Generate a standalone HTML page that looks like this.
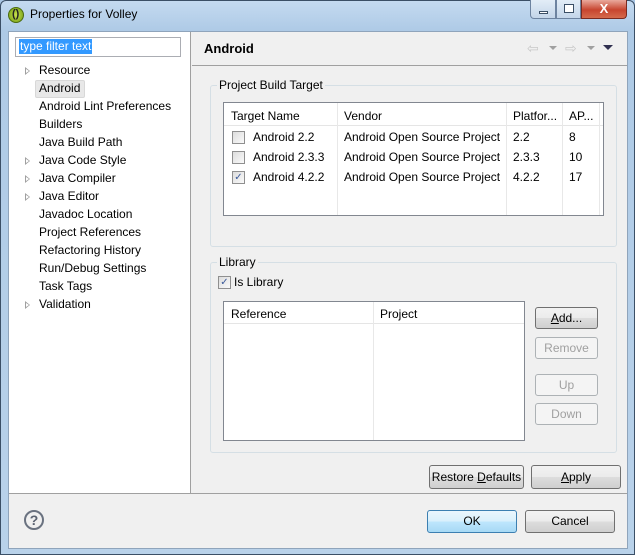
<!DOCTYPE html>
<html><head><style>
*{box-sizing:border-box;margin:0;padding:0}
body{width:635px;height:555px;position:relative;font-family:"Liberation Sans",sans-serif;font-size:12px;color:#000;background:#a9c6e4;overflow:hidden}
.a{position:absolute}
.frame{left:0;top:0;width:635px;height:555px;border:1px solid #3b4f66;border-radius:6px 6px 0 0;background:linear-gradient(#c4daf0,#aecae6 30px,#b9d2ea)}
.client{left:8px;top:31px;width:620px;height:518px;background:#f0f0f0;border:1px solid #8fa4bb}
.btn{position:absolute;border:1px solid #707070;border-radius:3px;background:linear-gradient(#f2f2f2,#ebebeb 50%,#dddddd 51%,#cfcfcf);text-align:center;line-height:20px}
.dis{color:#a0a0a0;border-color:#adb2b5;background:#f4f4f4}
.grp{position:absolute;border:1px solid #d5dfe5;border-radius:3px}
.lbl{position:absolute;background:#f0f0f0;padding:0 2px}
.cb{position:absolute;width:13px;height:13px;border:1px solid #8f8f8f;background:linear-gradient(135deg,#dcdcdc,#fafafa)}
.tw{position:absolute;background:#fff;border:1px solid #828790}
.li{position:absolute;left:39px}
.tri{position:absolute;left:25px;width:0;height:0;border-left:5px solid #a0a0a0;border-top:4px solid transparent;border-bottom:4px solid transparent}
.tri:after{content:"";position:absolute;left:-4px;top:-2px;border-left:3px solid #fff;border-top:2px solid transparent;border-bottom:2px solid transparent}
</style></head><body>
<div class="a frame"></div>
<div class="a" style="left:8px;top:7px;width:16px;height:16px;border-radius:50%;background:radial-gradient(#c8e04c,#6f9a12);border:1px solid #4a6a10"></div>
<div class="a" style="left:12px;top:8px;font-size:11px;font-weight:bold;color:#222">()</div>
<div class="a" style="left:30px;top:7px;font-size:12px">Properties for Volley</div>
<div class="a" style="left:530px;top:0;width:26px;height:19px;border:1px solid #6d83a0;border-top:0;border-radius:0 0 0 4px;background:linear-gradient(#e3edf7,#c3d5e9)"><div class="a" style="left:8px;top:11px;width:9px;height:3px;background:#fff;border:1px solid #3b4f66"></div></div>
<div class="a" style="left:556px;top:0;width:25px;height:19px;border:1px solid #6d83a0;border-top:0;background:linear-gradient(#e3edf7,#c3d5e9)"><div class="a" style="left:7px;top:4px;width:10px;height:9px;border:1px solid #3b4f66;background:#fff"></div></div>
<div class="a" style="left:581px;top:0;width:46px;height:19px;border:1px solid #7a2a20;border-top:0;border-radius:0 0 4px 0;background:linear-gradient(#e9a99c,#c7452f 55%,#d56a4c);color:#fff;font-weight:bold;font-size:13px;text-align:center;line-height:17px">X</div>
<div class="a client"></div>
<div class="a" style="left:9px;top:32px;width:182px;height:461px;background:#fff;border-right:1px solid #a0a0a0"></div>
<div class="a" style="left:15px;top:37px;width:166px;height:20px;border:1px solid #abadb3;background:#fff"></div>
<div class="a" style="left:19px;top:39px;background:#3399ff;color:#fff;padding:0 1px;line-height:15px">type filter text</div>
<div class="tri" style="top:67px"></div><div class="li" style="top:63px">Resource</div>
<div class="a" style="left:35px;top:80px;width:50px;height:18px;background:#e8e8e8;border:1px solid #d8d8d8;border-radius:2px"></div>
<div class="li" style="top:81px">Android</div>
<div class="li" style="top:99px">Android Lint Preferences</div>
<div class="li" style="top:117px">Builders</div>
<div class="li" style="top:135px">Java Build Path</div>
<div class="tri" style="top:157px"></div><div class="li" style="top:153px">Java Code Style</div>
<div class="tri" style="top:175px"></div><div class="li" style="top:171px">Java Compiler</div>
<div class="tri" style="top:193px"></div><div class="li" style="top:189px">Java Editor</div>
<div class="li" style="top:207px">Javadoc Location</div>
<div class="li" style="top:225px">Project References</div>
<div class="li" style="top:243px">Refactoring History</div>
<div class="li" style="top:261px">Run/Debug Settings</div>
<div class="li" style="top:279px">Task Tags</div>
<div class="tri" style="top:301px"></div><div class="li" style="top:297px">Validation</div>
<div class="a" style="left:192px;top:32px;width:435px;height:34px;border-bottom:1px solid #a0a0a0"></div>
<div class="a" style="left:204px;top:41px;font-weight:bold;font-size:13px">Android</div>
<div class="a" style="left:527px;top:40px;color:#c8c8c8;font-size:14px">⇦</div>
<div class="a" style="left:549px;top:46px;border-top:4px solid #a0a0a0;border-left:4px solid transparent;border-right:4px solid transparent"></div>
<div class="a" style="left:565px;top:40px;color:#c8c8c8;font-size:14px">⇨</div>
<div class="a" style="left:587px;top:46px;border-top:4px solid #a0a0a0;border-left:4px solid transparent;border-right:4px solid transparent"></div>
<div class="a" style="left:603px;top:45px;border-top:5px solid #303050;border-left:5px solid transparent;border-right:5px solid transparent"></div>
<div class="grp" style="left:210px;top:85px;width:407px;height:162px"></div>
<div class="lbl" style="left:217px;top:78px">Project Build Target</div>
<div class="tw" style="left:223px;top:102px;width:381px;height:114px"></div>
<div class="a" style="left:224px;top:103px;width:379px;height:23px;border-bottom:1px solid #e5e5e5"></div>
<div class="a" style="left:337px;top:103px;width:1px;height:112px;background:#e8e8e8"></div>
<div class="a" style="left:506px;top:103px;width:1px;height:112px;background:#e8e8e8"></div>
<div class="a" style="left:562px;top:103px;width:1px;height:112px;background:#e8e8e8"></div>
<div class="a" style="left:599px;top:103px;width:1px;height:112px;background:#e8e8e8"></div>
<div class="a" style="left:231px;top:109px">Target Name</div>
<div class="a" style="left:344px;top:109px">Vendor</div>
<div class="a" style="left:513px;top:109px">Platfor...</div>
<div class="a" style="left:569px;top:109px">AP...</div>
<div class="cb" style="left:232px;top:131px"></div><div class="a" style="left:253px;top:130px">Android 2.2</div><div class="a" style="left:344px;top:130px">Android Open Source Project</div><div class="a" style="left:513px;top:130px">2.2</div><div class="a" style="left:569px;top:130px">8</div>
<div class="cb" style="left:232px;top:151px"></div><div class="a" style="left:253px;top:150px">Android 2.3.3</div><div class="a" style="left:344px;top:150px">Android Open Source Project</div><div class="a" style="left:513px;top:150px">2.3.3</div><div class="a" style="left:569px;top:150px">10</div>
<div class="cb" style="left:232px;top:171px;font-size:10px;line-height:11px;color:#3b5a9a;text-align:center">✓</div><div class="a" style="left:253px;top:170px">Android 4.2.2</div><div class="a" style="left:344px;top:170px">Android Open Source Project</div><div class="a" style="left:513px;top:170px">4.2.2</div><div class="a" style="left:569px;top:170px">17</div>
<div class="grp" style="left:210px;top:262px;width:407px;height:191px"></div>
<div class="lbl" style="left:217px;top:255px">Library</div>
<div class="cb" style="left:218px;top:276px;font-size:10px;line-height:11px;color:#3b5a9a;text-align:center">✓</div>
<div class="a" style="left:234px;top:275px">Is Library</div>
<div class="tw" style="left:223px;top:301px;width:302px;height:140px"></div>
<div class="a" style="left:224px;top:302px;width:300px;height:22px;border-bottom:1px solid #e5e5e5"></div>
<div class="a" style="left:373px;top:302px;width:1px;height:138px;background:#e8e8e8"></div>
<div class="a" style="left:231px;top:307px">Reference</div>
<div class="a" style="left:380px;top:307px">Project</div>
<div class="btn" style="left:535px;top:307px;width:63px;height:22px"><u>A</u>dd...</div>
<div class="btn dis" style="left:535px;top:337px;width:63px;height:22px">Remove</div>
<div class="btn dis" style="left:535px;top:374px;width:63px;height:22px">Up</div>
<div class="btn dis" style="left:535px;top:403px;width:63px;height:22px">Down</div>
<div class="btn" style="left:429px;top:465px;width:95px;height:24px;line-height:22px">Restore <u>D</u>efaults</div>
<div class="btn" style="left:531px;top:465px;width:90px;height:24px;line-height:22px"><u>A</u>pply</div>
<div class="a" style="left:9px;top:493px;width:618px;height:1px;background:#a0a0a0"></div>
<div class="a" style="left:24px;top:510px;width:20px;height:20px;border-radius:50%;border:2px solid #6a7280;color:#5a6270;font-weight:bold;font-size:14px;text-align:center;line-height:16px">?</div>
<div class="btn" style="left:427px;top:510px;width:90px;height:23px;border-color:#3c7fb1;background:linear-gradient(#eaf6fd,#d9f0fc 50%,#bee6fd 51%,#a7d9f5)">OK</div>
<div class="btn" style="left:525px;top:510px;width:90px;height:23px">Cancel</div>
</body></html>
